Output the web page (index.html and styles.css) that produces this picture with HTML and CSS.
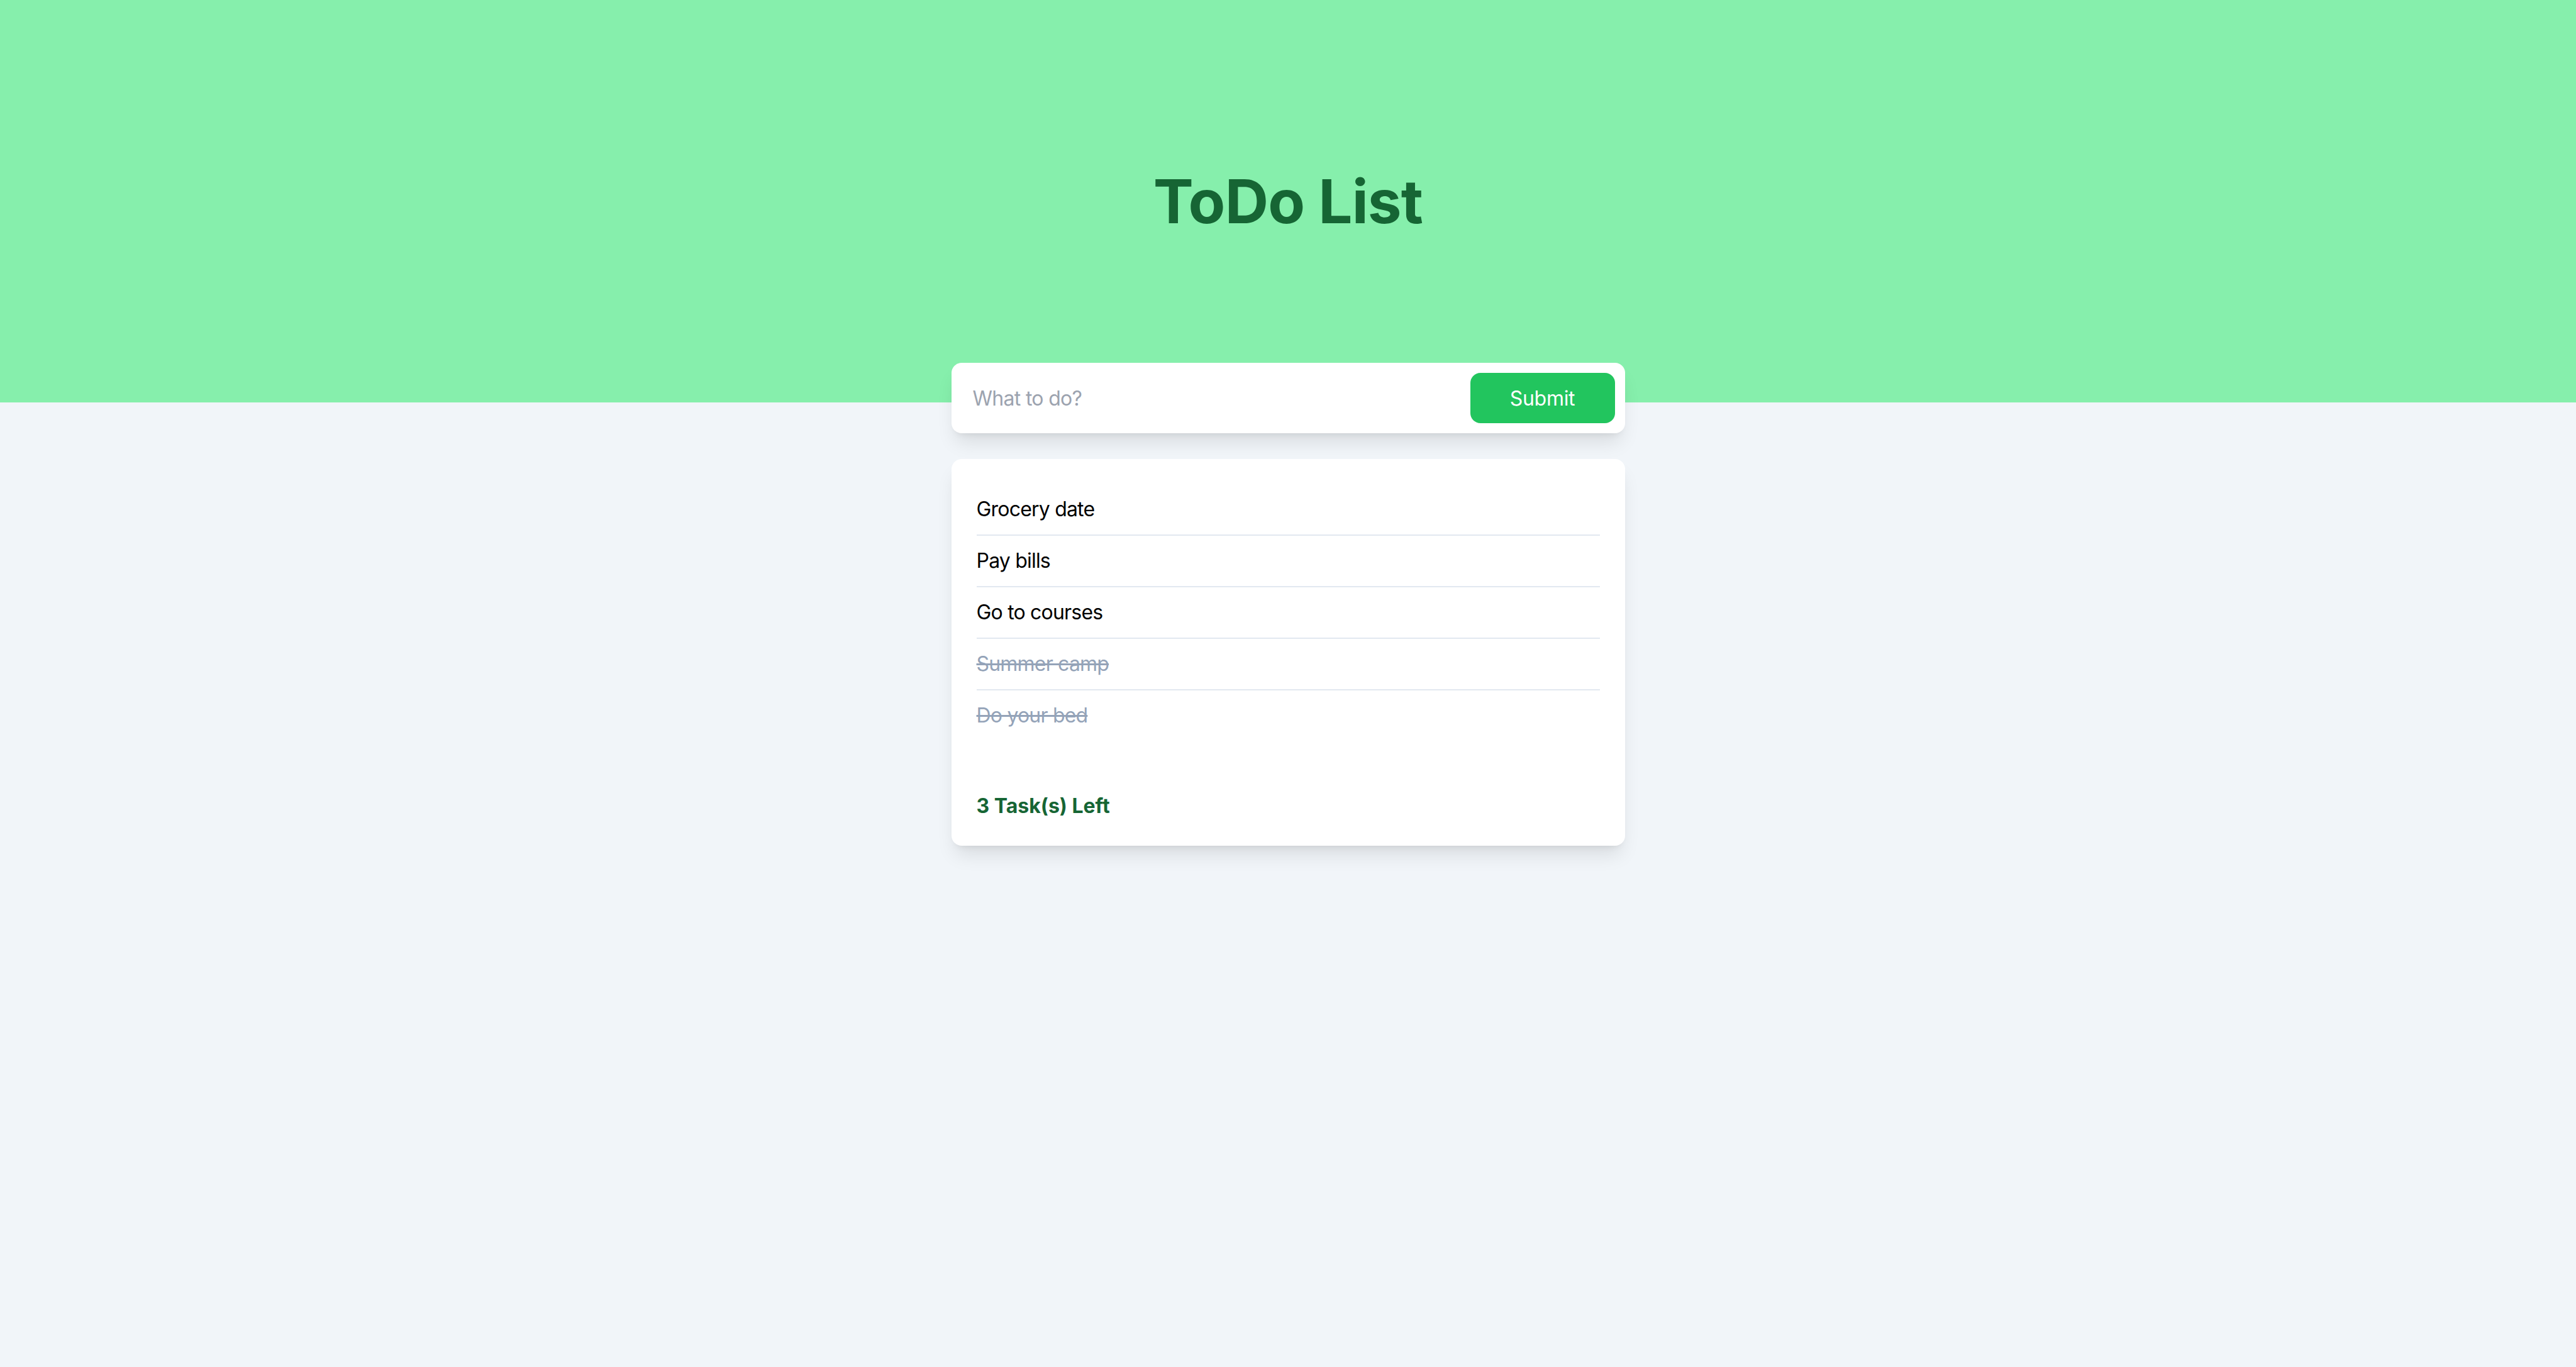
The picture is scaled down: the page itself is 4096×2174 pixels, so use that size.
FILE: index.html
```html
<!DOCTYPE html>
<html lang="en">
<head>
<meta charset="utf-8">
<title>ToDo List</title>
<link rel="stylesheet" href="styles.css">
</head>
<body>
  <header class="hero">
    <h1 class="title">ToDo List</h1>
  </header>
  <main class="content">
    <form class="entry">
      <input class="entry-input" type="text" placeholder="What to do?">
      <button class="entry-submit" type="button">Submit</button>
    </form>
    <section class="list-card">
      <ul class="tasks">
        <li class="task">Grocery date</li>
        <li class="task">Pay bills</li>
        <li class="task">Go to courses</li>
        <li class="task done">Summer camp</li>
        <li class="task done">Do your bed</li>
      </ul>
      <p class="summary">3 Task(s) Left</p>
    </section>
  </main>
</body>
</html>
```

FILE: styles.css
```css
* { box-sizing: border-box; }

html, body {
  margin: 0;
  padding: 0;
}

body {
  background: #f1f5f9;
  font-family: Inter, "Noto Sans", "Liberation Sans", sans-serif;
  min-height: 2174px;
}

.hero {
  background: #86efac;
  height: 640px;
  display: flex;
  align-items: center;
  justify-content: center;
}

.title {
  margin: 0;
  font-size: 96px;
  line-height: 1;
  font-weight: 700;
  color: #166534;
  letter-spacing: -0.8px;
}

.content {
  width: 1071px;
  margin: -63px auto 0;
  display: flex;
  flex-direction: column;
  gap: 41px;
}

.entry {
  margin: 0;
  background: #ffffff;
  border-radius: 16px;
  padding: 16px;
  display: flex;
  align-items: center;
  gap: 16px;
  box-shadow: 0 20px 30px -6px rgba(0, 0, 0, 0.1), 0 8px 12px -8px rgba(0, 0, 0, 0.1);
}

.entry-input {
  flex: 1;
  border: none;
  outline: none;
  background: transparent;
  font-family: inherit;
  font-size: 32px;
  letter-spacing: -0.7px;
  padding: 0 0 0 18px;
  color: #111827;
}

.entry-input::placeholder {
  color: #9ca3af;
}

.entry-submit {
  width: 230px;
  height: 80px;
  border: none;
  border-radius: 16px;
  background: #22c55e;
  color: #ffffff;
  font-family: inherit;
  font-size: 32px;
  font-weight: 400;
  letter-spacing: -0.3px;
}

.list-card {
  background: #ffffff;
  border-radius: 16px;
  padding: 40px 40px 39px;
  box-shadow: 0 20px 30px -6px rgba(0, 0, 0, 0.1), 0 8px 12px -8px rgba(0, 0, 0, 0.1);
}

.tasks {
  list-style: none;
  margin: 0;
  padding: 0;
}

.task {
  font-size: 32px;
  line-height: 48px;
  padding: 16px 0;
  color: #000000;
  letter-spacing: -0.8px;
  border-bottom: 2px solid #e2e8f0;
}

.task:last-child {
  border-bottom: none;
}

.task.done {
  color: #94a3b8;
  text-decoration: line-through;
}

.summary {
  margin: 80px 0 0;
  font-size: 32px;
  line-height: 48px;
  font-weight: 700;
  color: #166534;
}
```
